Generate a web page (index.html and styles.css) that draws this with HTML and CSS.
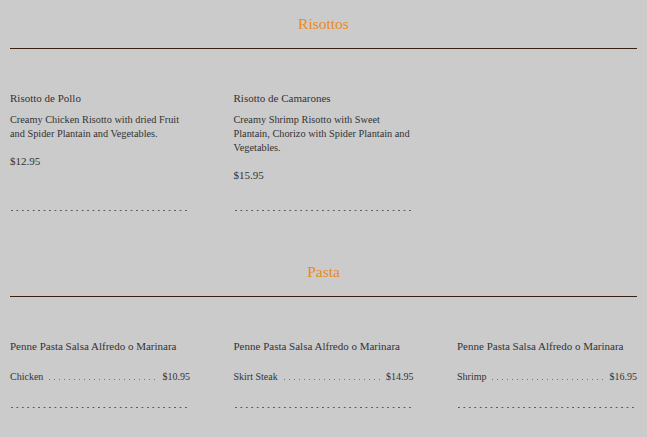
FILE: index.html
```html
<!DOCTYPE html>
<html>
<head>
<meta charset="utf-8">
<link rel="stylesheet" href="styles.css">
</head>
<body>
<section class="menu-section">
  <h2 class="section-title">Risottos</h2>
  <div class="items">
    <div class="item">
      <div class="item-name">Risotto de Pollo</div>
      <p class="item-desc">Creamy Chicken Risotto with dried Fruit and Spider Plantain and Vegetables.</p>
      <div class="item-price">$12.95</div>
      <div class="divider"></div>
    </div>
    <div class="item">
      <div class="item-name">Risotto de Camarones</div>
      <p class="item-desc">Creamy Shrimp Risotto with Sweet Plantain, Chorizo with Spider Plantain and Vegetables.</p>
      <div class="item-price">$15.95</div>
      <div class="divider"></div>
    </div>
  </div>
</section>
<section class="menu-section">
  <h2 class="section-title">Pasta</h2>
  <div class="items">
    <div class="item">
      <div class="item-name">Penne Pasta Salsa Alfredo o Marinara</div>
      <div class="option"><span>Chicken</span><span class="leader"></span><span>$10.95</span></div>
      <div class="divider short"></div>
    </div>
    <div class="item">
      <div class="item-name">Penne Pasta Salsa Alfredo o Marinara</div>
      <div class="option"><span>Skirt Steak</span><span class="leader"></span><span>$14.95</span></div>
      <div class="divider short"></div>
    </div>
    <div class="item">
      <div class="item-name">Penne Pasta Salsa Alfredo o Marinara</div>
      <div class="option"><span>Shrimp</span><span class="leader"></span><span>$16.95</span></div>
      <div class="divider short"></div>
    </div>
  </div>
</section>
</body>
</html>
```

FILE: styles.css
```css
html, body {
  margin: 0;
  padding: 0;
  background: #cbcbcb;
}
body {
  font-family: "Liberation Serif", "Times New Roman", serif;
  color: #333;
  padding: 0 10px;
}
.menu-section {
  padding-bottom: 37px;
}
.section-title {
  margin: 14px 0 0;
  padding-bottom: 14px;
  border-bottom: 1px solid #3a2213;
  font-size: 15.5px;
  line-height: 20px;
  font-weight: normal;
  text-align: center;
  color: #ea8a1c;
}
.items {
  display: grid;
  grid-template-columns: repeat(3, 180px);
  column-gap: 43.5px;
  padding-top: 42px;
}
.item {
  display: flex;
  flex-direction: column;
}
.item-name {
  font-size: 11px;
  line-height: 14px;
}
.item-desc {
  margin: 8px 0 0;
  font-size: 10.3px;
  line-height: 14px;
}
.item-price {
  margin-top: 13px;
  font-size: 11px;
  line-height: 14px;
  margin-bottom: 28px;
}
.divider {
  margin-top: auto;
  height: 1px;
  width: 180px;
  background-image: linear-gradient(to right, #5e5656 0 2px, transparent 2px);
  background-size: 5.45px 1px;
  background-position: 1px 0;
}
.option {
  display: flex;
  align-items: baseline;
  margin-top: 17px;
  font-size: 10px;
  line-height: 14px;
  margin-bottom: 23px;
}
.leader {
  flex: 1;
  height: 1px;
  margin: 0 4px 0 6px;
  background-image: linear-gradient(to right, #777 0 1px, transparent 1px);
  background-size: 5px 1px;
}
```
